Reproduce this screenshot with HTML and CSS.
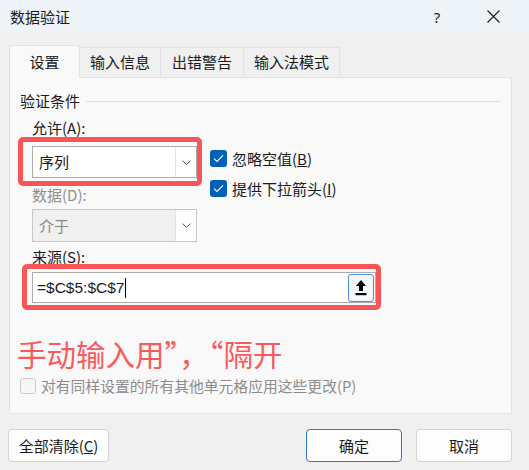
FILE: index.html
```html
<!DOCTYPE html>
<html lang="zh-CN">
<head>
<meta charset="utf-8">
<link rel="stylesheet" href="styles.css">
</head>
<body>
<div class="dialog">
  <div class="titlebar">
    <span class="title">数据验证</span>
    <span class="help">?</span>
    <span class="close">
      <svg width="13" height="13" viewBox="0 0 13 13"><path d="M0.5 0.5 L12.5 12.5 M12.5 0.5 L0.5 12.5" stroke="#1a1a1a" stroke-width="1.1" fill="none"/></svg>
    </span>
  </div>
  <div class="content">
    <div class="tabs">
      <div class="tab active">设置</div>
      <div class="tab">输入信息</div>
      <div class="tab">出错警告</div>
      <div class="tab">输入法模式</div>
    </div>
    <div class="panel">
      <div class="legend"><span>验证条件</span><span class="rule"></span></div>
      <div class="group">
        <div class="label allow">允许(A):</div>
        <div class="row">
          <div class="leftcol">
            <div class="combo highlight-combo">
              <span class="combo-text">序列</span>
              <span class="combo-btn"><svg width="9" height="5" viewBox="0 0 9 5"><path d="M0.5 0.5 L4.5 4.5 L8.5 0.5" stroke="#555" stroke-width="1" fill="none"/></svg></span>
              <span class="redmark red-combo"></span>
            </div>
            <div class="label disabled data-label">数据(D):</div>
            <div class="combo combo-disabled">
              <span class="combo-text">介于</span>
              <span class="combo-btn"><svg width="9" height="5" viewBox="0 0 9 5"><path d="M0.5 0.5 L4.5 4.5 L8.5 0.5" stroke="#555" stroke-width="1" fill="none"/></svg></span>
            </div>
          </div>
          <div class="checks">
            <div class="check"><span class="box checked"><svg width="11" height="9" viewBox="0 0 11 9"><path d="M1 4.6 L4 7.4 L10 1.4" stroke="#fff" stroke-width="1.1" fill="none"/></svg></span><span>忽略空值(<u>B</u>)</span></div>
            <div class="check"><span class="box checked"><svg width="11" height="9" viewBox="0 0 11 9"><path d="M1 4.6 L4 7.4 L10 1.4" stroke="#fff" stroke-width="1.1" fill="none"/></svg></span><span>提供下拉箭头(<u>I</u>)</span></div>
          </div>
        </div>
        <div class="label source-label">来源(S):</div>
        <div class="source">
          <span class="source-text">=$C$5:$C$7<span class="caret"></span></span>
          <span class="pick"><svg width="12" height="17" viewBox="0 0 12 17"><path d="M6 1 L11 7 L8 7 L8 12 L4 12 L4 7 L1 7 Z" fill="#000"/><rect x="0.5" y="14" width="11" height="2.2" fill="#000"/></svg></span>
          <span class="redmark red-source"></span>
        </div>
      </div>
      <div class="note">手动输入用”，“隔开</div>
      <div class="apply"><span class="box off"></span><span>对有同样设置的所有其他单元格应用这些更改(P)</span></div>
    </div>
    <div class="buttons">
      <button class="btn">全部清除(<u>C</u>)</button>
      <span class="spacer"></span>
      <button class="btn primary">确定</button>
      <button class="btn">取消</button>
    </div>
  </div>
</div>
</body>
</html>
```
FILE: styles.css
```css
* { box-sizing: border-box; }
html, body { margin: 0; padding: 0; }
body {
  width: 529px;
  height: 470px;
  background: #f0f0f0;
  font-family: "Noto Sans CJK SC", "Noto Sans", sans-serif;
  font-size: 15px;
  color: #1a1a1a;
  overflow: hidden;
}
.dialog { width: 529px; height: 470px; }
.titlebar {
  height: 33px;
  background: #eef3f8;
  display: flex;
  align-items: center;
  padding-left: 10px;
}
.title { flex: 1; line-height: 20px; }
.help { width: 16px; text-align: center; line-height: 20px; margin-right: 42px; font-family: "Noto Sans", sans-serif; font-size: 15px; }
.close { width: 13px; height: 13px; margin-right: 29px; display: flex; }
.content { padding: 11px 17px 0 9px; }
.tabs { display: flex; align-items: flex-end; height: 33px; }
.tab {
  height: 30px;
  line-height: 28px;
  padding: 0 10px;
  border: 1px solid #e2e2e2;
  border-bottom: none;
  border-left: none;
  background: #f0f0f0;
  margin-bottom: 0;
}
.tab.active {
  height: 33px;
  line-height: 31px;
  width: 71px;
  text-align: center;
  padding: 0;
  background: #f9f9f9;
  border-left: 1px solid #e2e2e2;
  border-right: 1px solid #e2e2e2;
  position: relative;
  z-index: 1;
  margin-bottom: -1px;
}
.tab:nth-child(2) { width: 81px; text-align: center; padding: 0; }
.tab:nth-child(3) { width: 83px; text-align: center; padding: 0; }
.tab:nth-child(4) { width: 96px; text-align: center; padding: 0; }
.panel {
  height: 337px;
  background: #f9f9f9;
  border: 1px solid #e2e2e2;
  padding: 13px 10px 0 10px;
}
.legend { display: flex; align-items: center; height: 20px; line-height: 20px; }
.legend .rule { flex: 1; border-top: 1px solid #dedede; margin-left: 6px; margin-top: 1px; }
.group { padding-left: 12px; }
.label { height: 20px; line-height: 20px; }
.allow { margin-top: 7px; }
.disabled { color: #8f8f8f; }
.row { display: flex; margin-top: 8px; }
.leftcol { width: 165px; }
.combo {
  position: relative;
  height: 32px;
  border: 1px solid #acacac;
  background: #fff;
  display: flex;
  align-items: center;
}
.combo-text { flex: 1; padding-left: 6px; line-height: 20px; }
.combo-btn {
  width: 21px;
  height: 100%;
  border-left: 1px solid #e3e3e3;
  background: #fff;
  display: flex;
  align-items: center;
  justify-content: center;
}
.combo-disabled { background: #f0f0f0; border-color: #c6c6c6; height: 33px; margin-top: 4px; }
.combo-disabled .combo-text { color: #8a8a8a; }
.data-label { margin-top: 7px; }
.redmark {
  position: absolute;
  border: 5px solid #f85656;
  border-radius: 5px;
  pointer-events: none;
}
.red-combo { left: -15px; top: -10px; right: -6px; bottom: -9px; }
.checks { margin-left: 13px; padding-top: 4px; display: flex; flex-direction: column; gap: 13px; }
.check { display: flex; align-items: center; height: 17px; line-height: 20px; gap: 5px; }
.box {
  width: 17px;
  height: 17px;
  border-radius: 3px;
  display: flex;
  align-items: center;
  justify-content: center;
  flex: none;
}
.box.checked { background: #005fb8; }
.box.off { width: 16px; height: 16px; border: 1px solid #c9c9c9; background: #f6f6f6; }
.source-label { margin-top: 5px; }
.source {
  position: relative;
  margin-top: 5px;
  width: 344px;
  height: 31px;
  border: 1px solid #acacac;
  background: #fff;
  display: flex;
  align-items: center;
  padding-right: 1px;
}
.source-text {
  flex: 1;
  padding-left: 4px;
  font-family: "Liberation Sans", "Noto Sans", sans-serif;
  font-size: 15.5px;
  line-height: 20px;
  display: flex;
  align-items: center;
}
.caret { display: inline-block; width: 1px; height: 20px; background: #000; margin-left: 1px; }
.pick {
  width: 26px;
  height: 28px;
  border: 1px solid #4a90d9;
  border-radius: 3px;
  background: #f4f8fd;
  display: flex;
  align-items: center;
  justify-content: center;
}
.red-source { left: -11px; top: -9px; right: -6px; bottom: -8px; }
.note {
  margin-top: 32px;
  margin-left: -3px;
  font-size: 29.5px;
  line-height: 36px;
  height: 36px;
  color: #fa5a5a;
}
.apply {
  margin-top: 5px;
  display: flex;
  align-items: center;
  gap: 5px;
  height: 20px;
  line-height: 20px;
  color: #8c8c8c;
  font-size: 14.8px;
}
.buttons { display: flex; margin-top: 15px; margin-left: -1px; gap: 14px; }
.spacer { flex: 1; }
.btn {
  height: 33px;
  border: 1px solid #d3d3d3;
  border-radius: 4px;
  background: #fdfdfd;
  font-family: "Noto Sans CJK SC", "Noto Sans", sans-serif;
  font-size: 15px;
  color: #1a1a1a;
  padding: 0;
  width: 96px;
  line-height: 20px;
}
.btn:first-child { width: 101px; }
.btn.primary { border-color: #2a78c8; }
```
